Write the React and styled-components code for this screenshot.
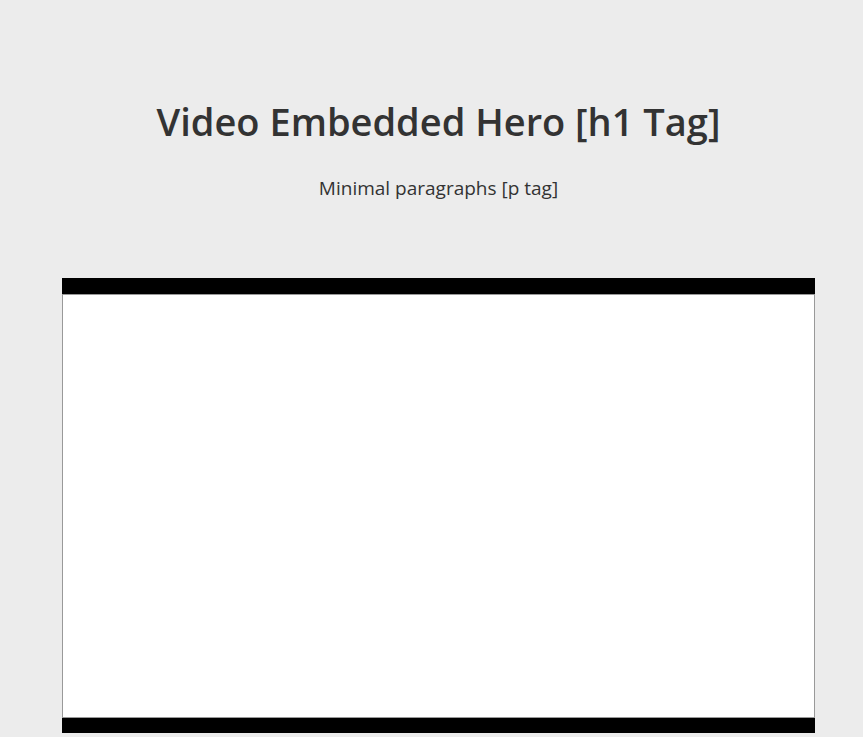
import React from "react";
import styled, { createGlobalStyle } from "styled-components";

const GlobalStyle = createGlobalStyle`
  html, body {
    margin: 0;
    padding: 0;
    background: #ececec;
  }
  body {
    font-family: "Open Sans", "Noto Sans", "Liberation Sans", sans-serif;
    color: #333;
  }
`;

const Hero = styled.section`
  display: flex;
  flex-direction: column;
  align-items: center;
  padding: 96px 48px 0 62px;
`;

const Title = styled.h1`
  margin: 0;
  font-size: 38px;
  font-weight: 600;
  line-height: 50px;
  text-align: center;
  color: #333;
`;

const Lead = styled.p`
  margin: 29px 0 0;
  font-size: 19px;
  line-height: 26px;
  text-align: center;
  color: #333;
`;

const VideoFrame = styled.div`
  margin-top: 77px;
  width: 753px;
  height: 455px;
  background: #000;
  display: flex;
  align-items: center;
`;

const Screen = styled.div`
  width: 100%;
  height: 424px;
  box-sizing: border-box;
  background: #fff;
  border: 1px solid #999;
`;

export default function App() {
  return (
    <>
      <GlobalStyle />
      <Hero>
        <Title>Video Embedded Hero [h1 Tag]</Title>
        <Lead>Minimal paragraphs [p tag]</Lead>
        <VideoFrame>
          <Screen />
        </VideoFrame>
      </Hero>
    </>
  );
}
